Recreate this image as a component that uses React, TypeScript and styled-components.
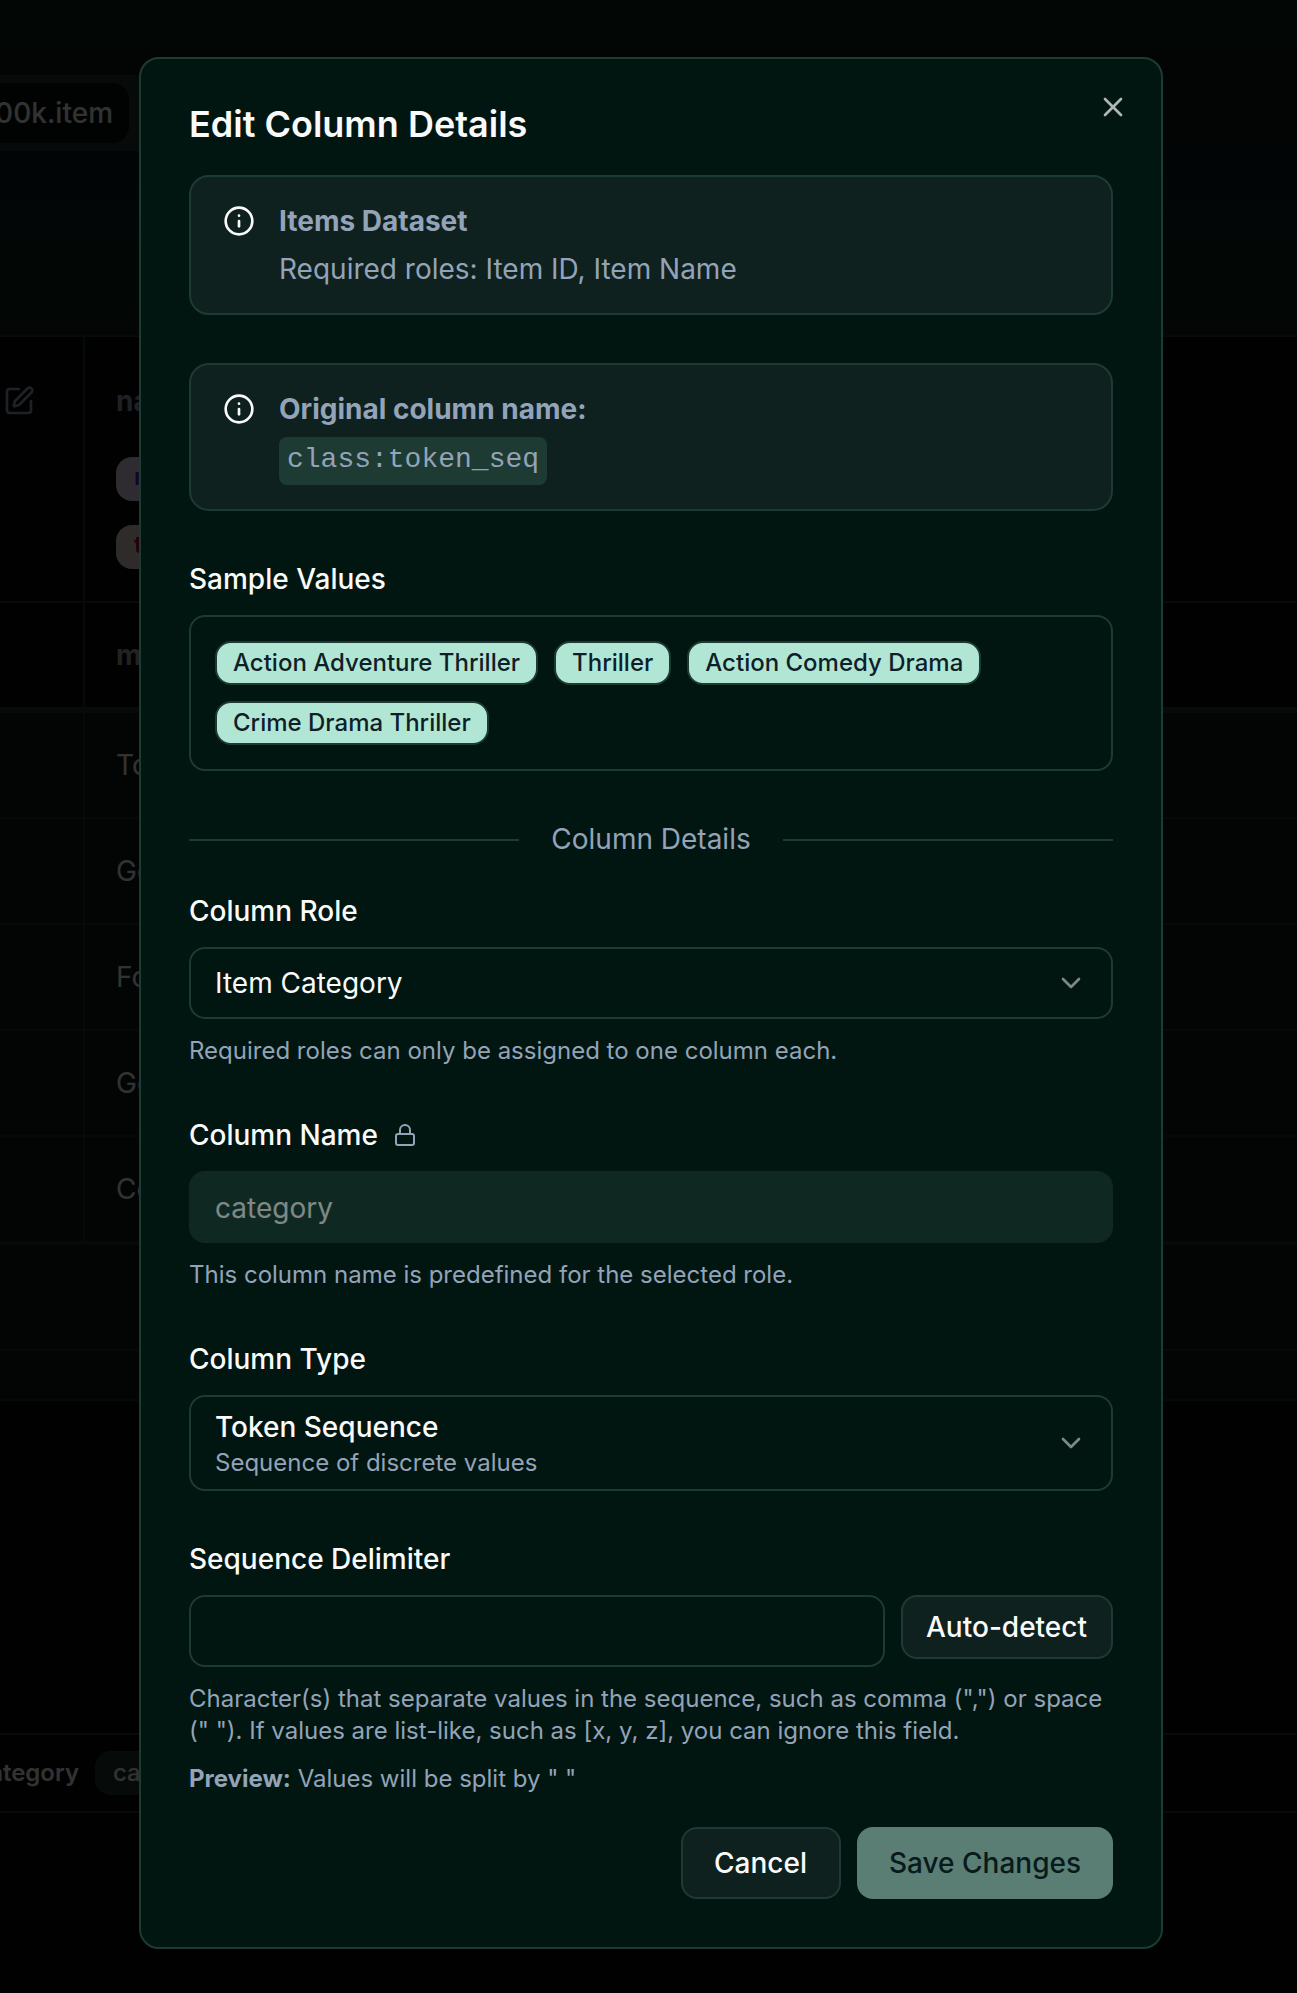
import React from "react";
import styled, { createGlobalStyle, css } from "styled-components";
import { ChevronDown, Info, Lock, SquarePen, X } from "lucide-react";

const c = {
  background: "#011611",
  card: "#0e211f",
  border: "#1d3b33",
  text: "#fafafa",
  muted: "#94a3b8",
  accent: "#b2e6d4",
  accentText: "#0f1f2a",
};

const Global = createGlobalStyle`
  *, *::before, *::after { box-sizing: border-box; }
  body {
    margin: 0;
    background: #000;
    color: ${c.text};
    font-family: Inter, "Liberation Sans", sans-serif;
    font-size: 28px;
    line-height: 40px;
    font-optical-sizing: none;
    font-variation-settings: "opsz" 14;
    -webkit-font-smoothing: antialiased;
  }
  button, input { font: inherit; font-variation-settings: inherit; color: inherit; }
  p, h2 { margin: 0; }
  svg { flex-shrink: 0; display: block; }
`;

/* ---------- page behind the dialog ---------- */

const Page = styled.div`
  height: 1993px;
  overflow: hidden;
  display: flex;
  flex-direction: column;
  background: #000502;
`;

const TopArea = styled.div`
  height: 335px;
  padding-top: 75px;
  background: linear-gradient(180deg, #0d241c 0px, #0b1c18 60px, #0f1f1b 335px);
`;

const TabList = styled.div`
  width: 200px;
  height: 76px;
  padding: 8px 0;
  background: #22382f;
`;

const Tab = styled.div`
  width: 129px;
  height: 60px;
  padding: 10px 16px 10px 0;
  display: flex;
  justify-content: flex-end;
  border-radius: 0 16px 16px 0;
  background: #020f0b;
  font-weight: 500;
  white-space: nowrap;
`;

const Table = styled.div`
  display: flex;
  flex-direction: column;
  border-top: 2px solid ${c.border};
`;

const Row = styled.div<{ $height: number; $line?: number; $header?: boolean }>`
  display: grid;
  grid-template-columns: 85px 1fr;
  height: ${(p) => p.$height}px;
  border-bottom: ${(p) => p.$line ?? 2}px solid ${(p) => (p.$header ? "#203a32" : "#1c332c")};
  background: ${(p) => (p.$header ? "#000804" : "#0e1c18")};
`;

const Cell = styled.div<{ $tone?: string }>`
  display: flex;
  flex-direction: column;
  justify-content: center;
  padding-left: 31px;
  color: ${(p) => p.$tone ?? c.text};
  font-weight: ${(p) => (p.$tone ? 700 : 400)};
`;

const SideCell = styled.div`
  padding: 48px 0 0 3px;
  border-right: 2px solid #1c332c;
  color: ${c.muted};
`;

const HeaderCell = styled(Cell)`
  justify-content: flex-start;
  align-items: flex-start;
  padding-top: 44px;
  gap: 24px;
`;

const HeaderName = styled.div`
  margin-bottom: 12px;
`;

const PageBadge = styled.span<{ $bg: string; $fg: string }>`
  height: 44px;
  padding: 4px 18px 8px;
  border-radius: 16px;
  background: ${(p) => p.$bg};
  color: ${(p) => p.$fg};
  font-size: 24px;
  line-height: 32px;
  font-weight: 600;
`;

const TableFooter = styled.div`
  height: 156px;
  display: flex;
  flex-direction: column;
  background: #0e1c18;
  border-bottom: 2px solid #1c332c;
`;

const FooterRule = styled.div`
  height: 106px;
  border-bottom: 2px solid #1c332c;
`;

const RoleBar = styled.div`
  height: 80px;
  margin-top: 332px;
  display: flex;
  align-items: center;
  gap: 16px;
  border-top: 2px solid #203a32;
  border-bottom: 2px solid #203a32;
  font-size: 24px;
  line-height: 32px;
  white-space: nowrap;
`;

const RoleName = styled.div`
  width: 79px;
  display: flex;
  justify-content: flex-end;
  font-weight: 600;
`;

const RoleChip = styled.div`
  padding: 6px 18px;
  border-radius: 16px;
  background: #22382f;
  font-weight: 500;
`;

/* ---------- dialog ---------- */

const Overlay = styled.div`
  position: fixed;
  inset: 0;
  padding: 57px 0 0 139px;
  background: rgba(0, 0, 0, 0.8);
`;

const Dialog = styled.div`
  position: relative;
  width: 1024px;
  height: 1892px;
  padding: 48px;
  display: flex;
  flex-direction: column;
  gap: 32px;
  border: 2px solid ${c.border};
  border-radius: 20px;
  background: ${c.background};
`;

const CloseButton = styled.button`
  position: absolute;
  top: 32px;
  right: 32px;
  padding: 0;
  border: 0;
  background: none;
  opacity: 0.7;
`;

const Title = styled.h2`
  height: 36px;
  font-size: 36px;
  line-height: 34px;
  font-weight: 600;
`;

const Sections = styled.div`
  display: flex;
  flex-direction: column;
  gap: 48px;
`;

const Alert = styled.div`
  display: flex;
  gap: 24px;
  padding: 24px 32px;
  border: 2px solid ${c.border};
  border-radius: 20px;
  background: ${c.card};
  & > svg { margin-top: 4px; }
`;

const AlertBody = styled.div`
  display: flex;
  flex-direction: column;
  align-items: flex-start;
  gap: 8px;
  color: ${c.muted};
`;

const Strong = styled.strong`
  font-weight: 700;
`;

const Code = styled.code`
  height: 48px;
  padding: 3px 8px 5px;
  border-radius: 8px;
  background: ${c.border};
  font-family: "Liberation Mono", monospace;
  font-size: 28px;
`;

const Field = styled.div`
  display: flex;
  flex-direction: column;
  gap: 16px;
`;

const Label = styled.div`
  display: flex;
  align-items: center;
  gap: 15px;
  font-weight: 500;
  & > svg { color: ${c.muted}; }
`;

const Samples = styled.div`
  display: flex;
  flex-wrap: wrap;
  gap: 16px;
  padding: 24px;
  border: 2px solid ${c.border};
  border-radius: 16px;
`;

const Badge = styled.span`
  padding: 4px 16px;
  border: 2px solid ${c.border};
  border-radius: 16px;
  background: ${c.accent};
  color: ${c.accentText};
  font-size: 24px;
  line-height: 32px;
  font-weight: 500;
`;

const Divider = styled.div`
  display: flex;
  align-items: center;
  gap: 32px;
  color: ${c.muted};
  &::before, &::after {
    content: "";
    flex: 1;
    height: 2px;
    margin-top: 2px;
    background: ${c.border};
  }
`;

const DetailFields = styled(Sections)`
  margin-top: -16px;
`;

const boxed = css`
  border: 2px solid ${c.border};
  border-radius: 16px;
  background: transparent;
`;

const Select = styled.button<{ $tall?: boolean }>`
  ${boxed}
  height: ${(p) => (p.$tall ? 96 : 72)}px;
  padding: 0 24px;
  display: flex;
  align-items: center;
  justify-content: space-between;
  text-align: left;
  & > svg { opacity: 0.5; }
`;

const Option = styled.span`
  display: flex;
  flex-direction: column;
  font-weight: 500;
`;

const Hint = styled.span`
  font-size: 24px;
  line-height: 32px;
  font-weight: 400;
  color: ${c.muted};
`;

const Input = styled.input`
  ${boxed}
  width: 100%;
  min-width: 0;
  height: 72px;
  padding: 2px 24px 0;
  &:disabled {
    background: ${c.border};
    opacity: 0.5;
  }
`;

const InputRow = styled.div`
  display: flex;
  align-items: flex-start;
  gap: 16px;
`;

const Button = styled.button<{ $width: number; $small?: boolean; $primary?: boolean }>`
  flex: none;
  width: ${(p) => p.$width}px;
  height: ${(p) => (p.$small ? 64 : 72)}px;
  padding: ${(p) => (p.$primary ? "0" : "0 1px 0 0")};
  border: ${(p) => (p.$primary ? "0" : `2px solid ${c.border}`)};
  border-radius: 16px;
  background: ${(p) => (p.$primary ? c.accent : c.card)};
  color: ${(p) => (p.$primary ? c.accentText : c.text)};
  font-weight: 500;
  &:disabled { opacity: 0.5; }
`;

const Actions = styled.div`
  display: flex;
  justify-content: flex-end;
  gap: 16px;
`;

const samples = ["Action Adventure Thriller", "Thriller", "Action Comedy Drama", "Crime Drama Thriller"];
const titles = ["Toy Story", "GoldenEye", "Four Rooms", "Get Shorty", "Copycat"];

export default function App() {
  return (
    <>
      <Global />
      <Page>
        <TopArea>
          <TabList>
            <Tab>00k.item</Tab>
          </TabList>
        </TopArea>
        <Table>
          <Row $height={266} $header>
            <SideCell>
              <SquarePen size={32} />
            </SideCell>
            <HeaderCell $tone={c.muted}>
              <HeaderName>name</HeaderName>
              <PageBadge $bg="#e6d5f5" $fg="#6d18c9">name</PageBadge>
              <PageBadge $bg="#efd6d6" $fg="#b00a35">token</PageBadge>
            </HeaderCell>
          </Row>
          <Row $height={110} $line={6} $header>
            <SideCell />
            <Cell $tone="#a0aeaa">movie_title</Cell>
          </Row>
          {titles.map((title, i) => (
            <Row key={title} $height={i === 4 ? 108 : 106} $line={i === 4 ? 4 : 2}>
              <SideCell />
              <Cell>{title}</Cell>
            </Row>
          ))}
        </Table>
        <TableFooter>
          <FooterRule />
        </TableFooter>
        <RoleBar>
          <RoleName>category</RoleName>
          <RoleChip>category</RoleChip>
        </RoleBar>
      </Page>

      <Overlay>
        <Dialog role="dialog" aria-labelledby="dialog-title">
          <Title id="dialog-title">Edit Column Details</Title>
          <Sections>
            <Alert>
              <Info size={32} />
              <AlertBody>
                <Strong>Items Dataset</Strong>
                <span>Required roles: Item ID, Item Name</span>
              </AlertBody>
            </Alert>
            <Alert>
              <Info size={32} />
              <AlertBody>
                <Strong>Original column name:</Strong>
                <Code>class:token_seq</Code>
              </AlertBody>
            </Alert>
            <Field>
              <Label>Sample Values</Label>
              <Samples>
                {samples.map((s) => (
                  <Badge key={s}>{s}</Badge>
                ))}
              </Samples>
            </Field>
            <Divider>Column Details</Divider>
            <DetailFields>
              <Field>
                <Label>Column Role</Label>
                <Select>
                  Item Category
                  <ChevronDown size={32} />
                </Select>
                <Hint>Required roles can only be assigned to one column each.</Hint>
              </Field>
              <Field>
                <Label>
                  Column Name
                  <Lock size={24} />
                </Label>
                <Input disabled defaultValue="category" />
                <Hint>This column name is predefined for the selected role.</Hint>
              </Field>
              <Field>
                <Label>Column Type</Label>
                <Select $tall>
                  <Option>
                    Token Sequence
                    <Hint>Sequence of discrete values</Hint>
                  </Option>
                  <ChevronDown size={32} />
                </Select>
              </Field>
              <Field>
                <Label>Sequence Delimiter</Label>
                <InputRow>
                  <Input defaultValue=" " />
                  <Button $width={212} $small>Auto-detect</Button>
                </InputRow>
                <Hint>
                  Character(s) that separate values in the sequence, such as comma (",") or space (" "). If
                  values are list-like, such as [x, y, z], you can ignore this field.
                </Hint>
                <Hint>
                  <Strong>Preview:</Strong> Values will be split by " "
                </Hint>
              </Field>
            </DetailFields>
          </Sections>
          <Actions>
            <Button $width={160}>Cancel</Button>
            <Button $width={256} $primary disabled>Save Changes</Button>
          </Actions>
          <CloseButton aria-label="Close">
            <X size={32} />
          </CloseButton>
        </Dialog>
      </Overlay>
    </>
  );
}
